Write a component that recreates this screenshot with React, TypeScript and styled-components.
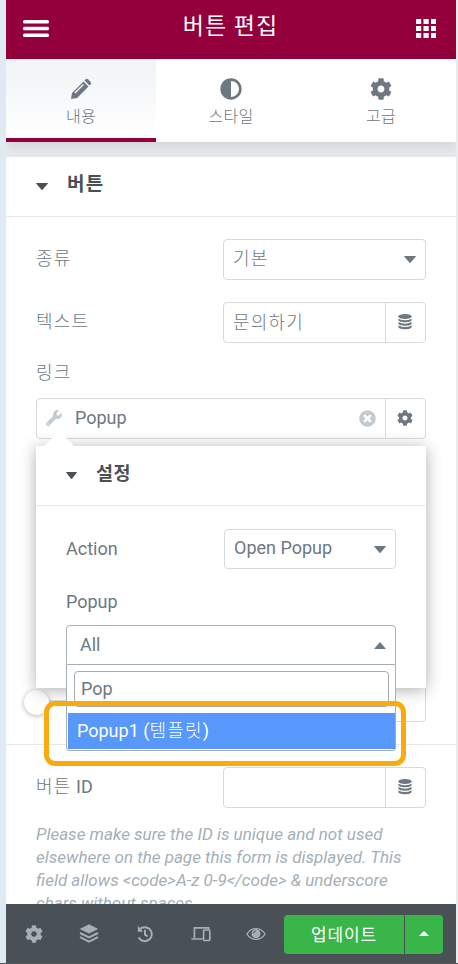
import React from "react";
import styled, { createGlobalStyle } from "styled-components";
import { FaCog, FaWrench, FaTimesCircle, FaAdjust } from "react-icons/fa";

const GlobalStyle = createGlobalStyle`
  * { box-sizing: border-box; }
  body {
    margin: 0;
    background: #ebebeb;
    font-family: Roboto, "Noto Sans CJK KR", sans-serif;
    font-size: 18px;
    color: #6d7882;
  }
`;

const Page = styled.div`
  width: 458px;
  height: 964px;
  padding: 0 2px 1px 6px;
  background: linear-gradient(90deg, #e0eaf4 0 6px, #ebebeb 6px);
  border-bottom: 1px solid #55585b;
  overflow: hidden;
`;

const Panel = styled.div`
  display: flex;
  flex-direction: column;
  width: 450px;
  height: 963px;
  overflow: hidden;
  background: #e6e9ec;
`;

const Header = styled.header`
  display: flex;
  flex: none;
  align-items: center;
  justify-content: space-between;
  height: 59px;
  padding: 0 20px 2px 17px;
  background: #93003c;
  color: #fff;
`;

const Title = styled.h1`
  margin: 0 0 3px -4px;
  font-size: 23px;
  line-height: 30px;
  font-weight: 400;
  letter-spacing: 1px;
`;

const Tabs = styled.nav`
  display: grid;
  flex: none;
  grid-template-columns: repeat(3, 150px);
  height: 83px;
  background: #fff;
  box-shadow: 0 2px 13px rgba(0, 0, 0, 0.12);
`;

const Tab = styled.div<{ $active?: boolean }>`
  display: flex;
  flex-direction: column;
  align-items: center;
  padding-top: 19px;
  border-bottom: 4px solid ${(p) => (p.$active ? "#93003c" : "transparent")};
  background: ${(p) => (p.$active ? "linear-gradient(#f1f3f5, #fff)" : "#fff")};
  svg { height: 22px; flex: none; }
`;

const TabText = styled.span`
  margin-top: 5px;
  font-size: 16px;
  line-height: 24px;
  font-weight: 300;
  letter-spacing: 0.3px;
`;

const Body = styled.main`
  flex: 1;
  min-height: 0;
  margin-top: 15px;
  overflow: hidden;
  background: #fff;
`;

const SectionHead = styled.div<{ $small?: boolean }>`
  display: flex;
  align-items: center;
  gap: 19px;
  height: 60px;
  padding: 0 0 4px 30px;
  border-bottom: 1px solid #e6e9ec;
  color: #495157;
  font-weight: 700;
  font-size: ${(p) => (p.$small ? 18.5 : 19)}px;
  letter-spacing: ${(p) => (p.$small ? 0.4 : 1.2)}px;
  line-height: 26px;
  svg { margin-top: 3px; }
`;

const Controls = styled.div`
  padding: 22px 30px 0;
`;

const Row = styled.div<{ $gap?: number }>`
  display: flex;
  justify-content: space-between;
  height: 41px;
  margin-bottom: ${(p) => p.$gap ?? 0}px;
`;

const Korean = styled.span`
  font-weight: 300;
  letter-spacing: 1.2px;
`;

const Label = styled.label`
  line-height: 26px;
  padding-top: 7px;
`;

const Field = styled.div<{ $width?: number; $height?: number }>`
  display: flex;
  align-items: center;
  width: ${(p) => p.$width ?? 203}px;
  height: ${(p) => p.$height ?? 41}px;
  border: 1px solid #d5dadf;
  border-radius: 4px;
  background: #fff;
`;

const Value = styled.span<{ $indent?: number; $raise?: boolean }>`
  flex: 1;
  padding-left: ${(p) => p.$indent ?? 9}px;
  padding-bottom: ${(p) => (p.$raise ? 2 : 0)}px;
  line-height: 26px;
`;

const Caret = styled.span`
  display: flex;
  margin-right: 9px;
`;

const Addon = styled.span`
  display: flex;
  align-items: center;
  justify-content: center;
  align-self: stretch;
  width: 40px;
  padding: 0 2px 2px 0;
  border-left: 1px solid #d5dadf;
`;

const LinkControl = styled.div`
  position: relative;
  display: flow-root;
  height: 74px;
`;

const LinkLabel = styled.div`
  height: 33px;
  line-height: 26px;
  margin-top: -5px;
  margin-bottom: 5px;
`;

const Wrench = styled(FaWrench)`
  margin: 0 0 2px 9px;
  color: #c2cbd2;
`;

const Clear = styled(FaTimesCircle)`
  margin: 0 9px 1px 0;
  color: #c2cbd2;
`;

const Popover = styled.div`
  position: absolute;
  z-index: 2;
  top: 81px;
  left: 0;
  width: 390px;
  height: 242px;
  background: #fff;
  box-shadow: 0 2px 15px rgba(0, 0, 0, 0.32);
`;

const Arrow = styled.svg`
  position: absolute;
  top: -13px;
  left: 7px;
`;

const PopoverBody = styled.div`
  padding: 23px 30px 0;
`;

const SelectBox = styled.div`
  display: flex;
  align-items: center;
  height: 40px;
  border: 1px solid #a4afb7;
  border-radius: 4px 4px 0 0;
  background: #fff;
`;

const Dropdown = styled.div`
  height: 86px;
  padding: 6px 0 0 1px;
  border: 1px solid #a4afb7;
  border-top: 0;
  border-radius: 0 0 4px 4px;
  background: #fff;
`;

const Search = styled.div`
  width: 315px;
  height: 36px;
  margin: 0 0 6px 6px;
  padding-left: 6px;
  border: 1px solid #aaa;
  border-radius: 4px;
  line-height: 34px;
`;

const Option = styled.div`
  height: 36px;
  padding-left: 9px;
  background: #5897fb;
  color: #fff;
  line-height: 35px;
`;

const Highlight = styled.div`
  position: absolute;
  z-index: 3;
  top: 336px;
  left: 8px;
  width: 362px;
  height: 65px;
  border: 5px solid #faab0c;
  border-radius: 11px;
`;

const SliderRow = styled.div`
  display: flex;
  align-items: center;
  justify-content: space-between;
  height: 306px;
  padding: 222px 30px 0;
  border-bottom: 1px solid #e6e9ec;
`;

const Track = styled.div`
  display: flex;
  align-items: center;
  width: 280px;
  height: 3px;
  margin-top: -2px;
  background: #d5dadf;
`;

const Handle = styled.div`
  flex: none;
  width: 25px;
  height: 25px;
  margin: 2px 0 0 -12px;
  border-radius: 50%;
  background: #fff;
  box-shadow: 0 1px 5px rgba(0, 0, 0, 0.3);
`;

const UnitField = styled(Field)`
  margin-top: -2px;
`;

const Description = styled.p`
  margin: 15px 0 0;
  color: #a4afb7;
  font-size: 17px;
  line-height: 23px;
  font-style: italic;
  white-space: nowrap;
`;

const Footer = styled.footer`
  display: flex;
  flex: none;
  align-items: center;
  height: 59px;
  padding: 0 13px 0 0;
  background: #495157;
  color: #a4afb7;
`;

const Tools = styled.div`
  display: grid;
  grid-template-columns: repeat(5, 55.6px);
  align-items: center;
  width: 278px;
`;

const Tool = styled.span`
  display: flex;
  justify-content: center;
`;

const Update = styled.button`
  width: 120px;
  height: 39px;
  margin-top: 2px;
  padding: 0 0 3px;
  border: 0;
  border-radius: 4px 0 0 4px;
  background: #39b54a;
  color: #fff;
  font: 400 17px Roboto, "Noto Sans CJK KR", sans-serif;
  letter-spacing: 0.8px;
`;

const UpdateMore = styled(Update)`
  display: flex;
  align-items: center;
  justify-content: center;
  width: 38px;
  margin-left: 1px;
  border-radius: 0 4px 4px 0;
`;

const Triangle = ({ up = false, width = 12, height = 7 }) => (
  <svg width={width} height={height} viewBox="0 0 12 7" preserveAspectRatio="none" fill="currentColor">
    <path d={up ? "M0 7 6 0l6 7z" : "M.5 0h11q.8.2.2.8L6.5 6.7q-.5.5-1 0L.3.8Q-.2.2.5 0z"} />
  </svg>
);

const MenuIcon = () => (
  <svg width="26" height="17" viewBox="0 0 26 17" fill="currentColor">
    <rect y="0" width="26" height="3.6" rx="1.5" />
    <rect y="6.7" width="26" height="3.6" rx="1.5" />
    <rect y="13.4" width="26" height="3.6" rx="1.5" />
  </svg>
);

const AppsIcon = () => (
  <svg width="20" height="19" viewBox="0 0 20 19" fill="currentColor">
    {[0, 7, 14].map((y) => [0, 7.5, 15].map((x) => <rect key={`${x}-${y}`} x={x} y={y} width="5.2" height="5" />))}
  </svg>
);

const PencilIcon = () => (
  <svg width="22" height="22" viewBox="0 0 22 22" fill="currentColor">
    <path fillRule="evenodd" d="m1 21 1-6L13.5 3.5l5 5L7 20zM5.4 15.4l8.5-8.5-1-1-8.5 8.5z" />
    <path d="m14.5 2.5 1.2-1.2q1.2-1 2.4 0l2.6 2.6q1 1.2 0 2.4l-1.2 1.2z" />
  </svg>
);

const DatabaseIcon = () => (
  <svg width="14" height="16" viewBox="0 0 14 16" fill="currentColor">
    <ellipse cx="7" cy="2.6" rx="6.7" ry="2.5" />
    {[4.7, 8.1, 11.5].map((y) => (
      <path key={y} d={`M.4 ${y}q6.6 3.2 13.2 0v1.4c0 3-13.2 3-13.2 0z`} />
    ))}
  </svg>
);

const LayersIcon = () => (
  <svg width="20" height="19" viewBox="0 0 20 19">
    <path d="M10 .3 19.3 5 10 9.4.7 5z" fill="currentColor" />
    <path d="m1 9 9 4.4L19 9M1 13.2l9 4.4 9-4.4" fill="none" stroke="currentColor" strokeWidth="2" />
  </svg>
);

const HistoryIcon = () => (
  <svg width="18" height="18" viewBox="0 0 18 18" fill="none" stroke="currentColor" strokeWidth="2">
    <path d="M3 5.2a7 7 0 1 1-.3 7.4" />
    <path d="M9 4.8V9.6l2.7 1.8" />
    <path d="M1.8.8v6h5.4z" fill="currentColor" stroke="none" />
  </svg>
);

const DevicesIcon = () => (
  <svg width="20" height="16" viewBox="0 0 20 16" fill="none" stroke="currentColor" strokeWidth="1.7">
    <path d="M3.4 12V1.8h14.2v1.5M.5 13h11" />
    <rect x="12.6" y="4" width="6.2" height="10.5" rx=".8" />
  </svg>
);

const EyeIcon = () => (
  <svg width="20" height="14" viewBox="0 0 20 14">
    <path d="M1 7c4.2-7.2 13.8-7.2 18 0-4.2 7.2-13.8 7.2-18 0z" fill="none" stroke="currentColor" strokeWidth="1.4" />
    <circle cx="10" cy="6.7" r="4.5" fill="currentColor" />
    <path d="M7.4 6.5q0-2.3 2.4-2.5" fill="none" stroke="#495157" />
  </svg>
);

export default function App() {
  return (
    <>
      <GlobalStyle />
      <Page>
        <Panel>
          <Header>
            <MenuIcon />
            <Title>버튼 편집</Title>
            <AppsIcon />
          </Header>
          <Tabs>
            <Tab $active><PencilIcon /><TabText>내용</TabText></Tab>
            <Tab><FaAdjust size={22} /><TabText>스타일</TabText></Tab>
            <Tab><FaCog size={22} /><TabText>고급</TabText></Tab>
          </Tabs>
          <Body>
            <SectionHead><Triangle />버튼</SectionHead>
            <Controls>
              <Row $gap={22}>
                <Label><Korean>종류</Korean></Label>
                <Field><Value $raise><Korean>기본</Korean></Value><Caret><Triangle /></Caret></Field>
              </Row>
              <Row $gap={22}>
                <Label><Korean>텍스트</Korean></Label>
                <Field><Value><Korean>문의하기</Korean></Value><Addon><DatabaseIcon /></Addon></Field>
              </Row>
              <LinkControl>
                <LinkLabel><Korean>링크</Korean></LinkLabel>
                <Field $width={390}>
                  <Wrench size={16} />
                  <Value $indent={13} $raise>Popup</Value>
                  <Clear size={17} />
                  <Addon><FaCog size={16} /></Addon>
                </Field>
                <Popover>
                  <Arrow width="32" height="14" viewBox="0 0 32 14"><path d="M0 14 13 1q3-2 6 0l13 13z" fill="#fff" /></Arrow>
                  <SectionHead $small><Triangle width={11} />설정</SectionHead>
                  <PopoverBody>
                    <Row $gap={12}>
                      <Label>Action</Label>
                      <Field $width={172} $height={40}><Value $raise>Open Popup</Value><Caret><Triangle /></Caret></Field>
                    </Row>
                    <Row $gap={2}>
                      <Label as="span">Popup</Label>
                    </Row>
                    <SelectBox><Value $indent={13}>All</Value><Caret><Triangle up /></Caret></SelectBox>
                    <Dropdown>
                      <Search>Pop</Search>
                      <Option>Popup1 (<Korean>템플릿</Korean>)</Option>
                    </Dropdown>
                  </PopoverBody>
                </Popover>
                <Highlight />
              </LinkControl>
            </Controls>
            <SliderRow>
              <Track><Handle /></Track>
              <UnitField $width={90} />
            </SliderRow>
            <Controls>
              <Row>
                <Label><Korean>버튼</Korean> ID</Label>
                <Field><Value /><Addon><DatabaseIcon /></Addon></Field>
              </Row>
              <Description>
                Please make sure the ID is unique and not used<br />
                elsewhere on the page this form is displayed. This<br />
                field allows &lt;code&gt;A-z 0-9&lt;/code&gt; &amp; underscore<br />
                chars without spaces.
              </Description>
            </Controls>
          </Body>
          <Footer>
            <Tools>
              <Tool><FaCog size={18} /></Tool>
              <Tool><LayersIcon /></Tool>
              <Tool><HistoryIcon /></Tool>
              <Tool><DevicesIcon /></Tool>
              <Tool><EyeIcon /></Tool>
            </Tools>
            <Update>업데이트</Update>
            <UpdateMore><Triangle up width={10} height={5} /></UpdateMore>
          </Footer>
        </Panel>
      </Page>
    </>
  );
}
